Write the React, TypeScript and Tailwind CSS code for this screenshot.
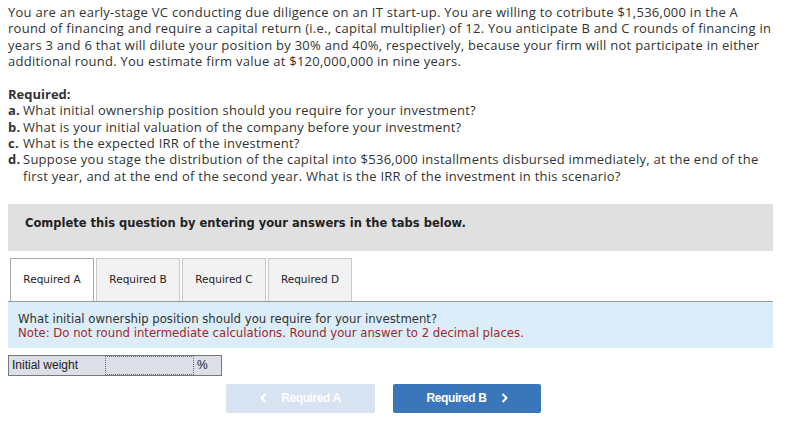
import React from 'react';

const tabs = ['Required A', 'Required B', 'Required C', 'Required D'];

export default function App() {
  return (
    <div className="w-[793px] h-[445px] bg-white text-[#333] font-['Open_Sans',sans-serif]">
      <div className="px-2 pt-[4px]">
        <p className="text-[13px] tracking-[0.26px] leading-[16.3px] whitespace-nowrap">
          You are an early-stage VC conducting due diligence on an IT start-up. You are willing to cotribute $1,536,000 in the A
          <br />
          round of financing and require a capital return (i.e., capital multiplier) of 12. You anticipate B and C rounds of financing in
          <br />
          years 3 and 6 that will dilute your position by 30% and 40%, respectively, because your firm will not participate in either
          <br />
          additional round. You estimate firm value at $120,000,000 in nine years.
        </p>

        <div className="mt-[17px] text-[13px] tracking-[0.26px] leading-[16.3px] whitespace-nowrap">
          <div className="font-bold tracking-normal">Required:</div>
          <div className="flex">
            <span className="font-bold w-[15px] shrink-0">a.</span>
            <span>What initial ownership position should you require for your investment?</span>
          </div>
          <div className="flex">
            <span className="font-bold w-[15px] shrink-0">b.</span>
            <span>What is your initial valuation of the company before your investment?</span>
          </div>
          <div className="flex">
            <span className="font-bold w-[15px] shrink-0">c.</span>
            <span>What is the expected IRR of the investment?</span>
          </div>
          <div className="flex">
            <span className="font-bold w-[15px] shrink-0">d.</span>
            <span>
              Suppose you stage the distribution of the capital into $536,000 installments disbursed immediately, at the end of the
              <br />
              first year, and at the end of the second year. What is the IRR of the investment in this scenario?
            </span>
          </div>
        </div>

        <div className="mt-[20px] w-[765px]">
          <div className="h-[47px] bg-[#e0e0e0] pt-[11px] px-[17px] font-['DejaVu_Sans',sans-serif] font-bold text-[11.5px] leading-[16px] text-[#222]">
            Complete this question by entering your answers in the tabs below.
          </div>

          <div className="mt-[7px] flex gap-[2px] pl-[2px] border-b border-[#999] font-['DejaVu_Sans',sans-serif] text-[10.5px] text-[#222]">
            {tabs.map((t, i) => (
              <div
                key={t}
                className={
                  i === 0
                    ? 'w-[84px] h-[43px] -mb-px bg-white border border-b-0 border-[#aaa] flex items-center justify-center'
                    : 'w-[84px] h-[43px] bg-[#f2f2f2] border border-b-0 border-[#c8c8c8] flex items-center justify-center'
                }
              >
                {t}
              </div>
            ))}
          </div>

          <div className="h-[46px] bg-[#dbedf9] px-[10px] pt-[10px] font-['DejaVu_Sans',sans-serif] text-[11.7px] leading-[14px]">
            <div className="text-[#333]">What initial ownership position should you require for your investment?</div>
            <div className="text-[#a3262a]">Note: Do not round intermediate calculations. Round your answer to 2 decimal places.</div>
          </div>

          <div className="mt-[7px] flex w-[214px] h-[21px] border border-[#777] bg-[#dcdfe8] font-['Liberation_Sans',sans-serif] text-[12px] text-[#222]">
            <div className="w-[96px] pl-[3px] flex items-center">Initial weight</div>
            <div className="w-[89px] border border-dotted border-[#4a6fb0] bg-[#dcdfe8]"></div>
            <div className="pl-[3px] flex items-center">%</div>
          </div>

          <div className="mt-[8px] flex gap-[18px] pl-[218px] font-['Liberation_Sans',sans-serif] font-bold text-[12px] tracking-[-0.4px] text-white">
            <div className="w-[149px] h-[29px] rounded-[2px] bg-[#d7e3f0] flex items-center justify-center gap-[14px]">
              <svg width="7" height="10" viewBox="0 0 7 10" fill="none" stroke="white" strokeWidth="2">
                <path d="M5.5 1L1.5 5l4 4" />
              </svg>
              <span>Required A</span>
            </div>
            <div className="w-[148px] h-[29px] rounded-[2px] bg-[#3a76ba] flex items-center justify-center gap-[14px]">
              <span>Required B</span>
              <svg width="7" height="10" viewBox="0 0 7 10" fill="none" stroke="white" strokeWidth="2">
                <path d="M1.5 1l4 4-4 4" />
              </svg>
            </div>
          </div>
        </div>
      </div>
    </div>
  );
}
